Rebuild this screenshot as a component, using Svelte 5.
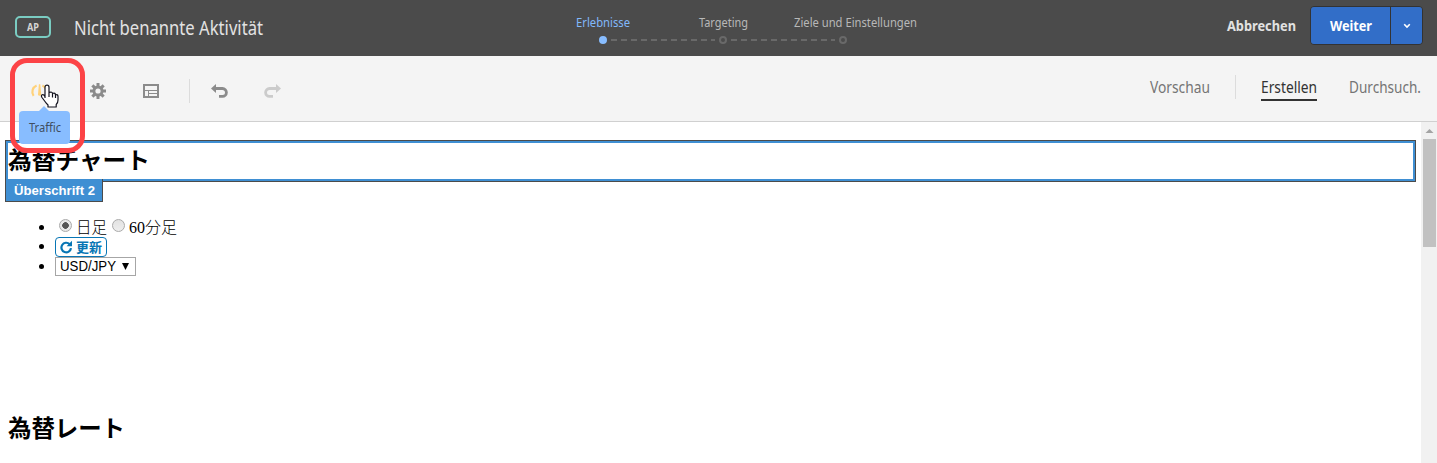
<script>
  const steps = [
    { label: 'Erlebnisse', width: 54, active: true },
    { label: 'Targeting', width: 49, active: false },
    { label: 'Ziele und Einstellungen', width: 123, active: false, shift: 12.5 }
  ];
</script>

{#snippet fit(text, width, size, height, base)}
  <svg class="fit" {width} {height}>
    <text x="0" y={base} font-size={size} textLength={width} lengthAdjust="spacingAndGlyphs">{text}</text>
  </svg>
{/snippet}

<div class="app">
  <header>
    <div class="identity">
      <span class="tag">{@render fit('AP', 12, 10, 18, 12.5)}</span>
      <h1>{@render fit('Nicht benannte Aktivität', 189, 19, 28, 21)}</h1>
    </div>
    <ol class="steps">
      {#each steps as step}
        <li class:active={step.active}>
          <span class="step-label" style:margin-left="{(step.shift ?? 0) * 2}px">{@render fit(step.label, step.width, 12.5, 18, 13)}</span>
          <i class="dot"></i>
        </li>
      {/each}
      <svg class="line" width="240" height="2"><path d="M8 1H112M128 1H232" stroke="#696969" stroke-width="2" stroke-dasharray="6 4" /></svg>
    </ol>
    <div class="actions">
      <span class="cancel">{@render fit('Abbrechen', 69, 14.5, 20, 15)}</span>
      <div class="split">
        <button class="next">{@render fit('Weiter', 42, 14.5, 20, 15)}</button>
        <button class="more" aria-label="Mehr"><svg width="8" height="6" viewBox="0 0 8 6"><path d="M1.2 1.2 4 4l2.8-2.8" fill="none" stroke="#fff" stroke-width="1.6" /></svg></button>
      </div>
    </div>
  </header>

  <nav>
    <div class="tools">
      <svg class="gauge" width="20" height="16" viewBox="0 0 20 16"><g fill="none" stroke="#ffd27a" stroke-width="2.2"><path d="M3.6 12.8A7 7 0 0 1 6.6 2.4M12.4 2.4A7 7 0 0 1 15.4 12.8" /></g><path d="M8.9 1.2h1.4l.9 10a1.6 1.6 0 1 1-3.2 0Z" fill="#ffd27a" /></svg>
      <svg class="gear" width="16" height="16" viewBox="-8 -8 16 16"><g fill="#8b8b8b">{#each [0, 45, 90, 135] as angle}<rect x="-1.5" y="-8" width="3" height="16" transform="rotate({angle})" />{/each}<circle r="5.5" /></g><circle r="2.6" fill="#f4f4f4" /></svg>
      <svg class="layout" width="16" height="14" viewBox="0 0 16 14"><path d="M1 1h14v12H1Z" fill="none" stroke="#8b8b8b" stroke-width="2" /><path d="M2 6.5h12M5.5 7v5M6 9.5h8" fill="none" stroke="#8b8b8b" /></svg>
      <i class="rule"></i>
      {@render arrow('#8b8b8b', false)}
      {@render arrow('#cbcbcb', true)}
    </div>
    <div class="modes">
      <span>{@render fit('Vorschau', 60, 15.5, 25, 17)}</span>
      <i class="rule"></i>
      <span class="current">{@render fit('Erstellen', 56, 15.5, 25, 17)}</span>
      <span>{@render fit('Durchsuch.', 72, 15.5, 25, 17)}</span>
    </div>
  </nav>

  <main>
    <div class="page">
      <h2 class="selected">{@render fit('為替チャート', 142, 23.5, 37, 28)}<span class="kind">{@render fit('Überschrift 2', 81, 13, 18, 13)}</span></h2>
      <ul>
        <li class="radios"><i class="radio on"></i><b>{@render fit('日足', 31, 16, 20, 16)}</b><i class="radio"></i><b>{@render fit('60分足', 48, 16, 20, 16)}</b></li>
        <li class="refresh"><span><svg width="13" height="14" viewBox="0 0 13 14"><path d="M9.6 4.1A4.8 4.8 0 1 0 11 8.2" fill="none" stroke="#0876b5" stroke-width="2.2" /><path d="M12 .8V6.2H6.6Z" fill="#0876b5" /></svg>更新</span></li>
        <li class="currency"><span>{@render fit('USD/JPY', 56, 13.8, 17, 13)}<svg width="8" height="7"><path d="M0 0h7L3.5 7Z" /></svg></span></li>
      </ul>
      <h2>{@render fit('為替レート', 117, 23.5, 37, 30.5)}</h2>
    </div>
    <div class="scrollbar"><svg width="16" height="17"><path d="M4.5 11h8L8.5 7Z" fill="#a3a3a3" /></svg><i></i></div>
  </main>

  <div class="tooltip">{@render fit('Traffic', 32, 12.5, 18, 13)}</div>
  <div class="highlight"></div>
  <svg class="pointer" width="20" height="25" viewBox="0 0 20 25"><path d="M5 14V3.2a2 2 0 0 1 4 0V8.5Q12.5 7.5 12.5 9.5Q15.5 8.5 15.5 11Q18 10 18 12.5V16Q18 19 16.2 20.5V23H8V21Q6 19 5 17.5L2 13.5Q.7 11.5 2.3 10.8T5 12.8M9 8.5V13M12.5 9.5V13.5M15.5 11V14" fill="#fff" stroke="#13131f" stroke-width="1.2" stroke-linejoin="round" /></svg>
</div>

{#snippet arrow(color, flipped)}
  <svg class="arrow" class:flipped width="17" height="14" viewBox="0 0 17 14"><path d="M0 4.5 5 0v9Z" fill={color} /><path d="M4 4.5h7.5a3.9 3.9 0 0 1 0 7.8H8" fill="none" stroke={color} stroke-width="2.8" /></svg>
{/snippet}

<style>
  :global(body) { margin: 0; background: #fff; }
  .app { position: relative; width: 1437px; height: 463px; overflow: hidden; font-family: "Noto Sans", sans-serif; display: flex; flex-direction: column; }
  .fit { display: block; overflow: visible; fill: currentColor; flex: none; }
  header { box-sizing: border-box; height: 56px; flex: none; background: #4b4b4b; display: grid; grid-template-columns: 543px 360px 1fr; }
  .identity { display: flex; align-items: center; padding-left: 15px; gap: 23px; }
  .tag { box-sizing: border-box; width: 36px; height: 22px; border: 2px solid #7accc2; border-radius: 5px; color: #d5d5d5; display: flex; align-items: center; justify-content: center; font-weight: 700; margin-bottom: 2px; }
  h1 { margin: 0; color: #e2e2e2; font-weight: 400; }
  .steps { margin: 0; padding: 14px 0 0; list-style: none; display: grid; grid-template-columns: repeat(3, 120px); position: relative; align-content: start; }
  .steps li { display: flex; flex-direction: column; align-items: center; gap: 4px; color: #b8b8b8; }
  .steps li.active { color: #82b9fb; }
  .dot { box-sizing: border-box; width: 8px; height: 8px; border: 2px solid #696969; border-radius: 50%; }
  .active .dot { background: #88bdff; border-color: #88bdff; }
  .line { position: absolute; left: 60px; top: 39px; }
  .actions { display: flex; align-items: flex-start; justify-content: flex-end; padding: 6px 14px 0 0; gap: 14px; font-weight: 700; }
  .cancel { color: #e2e2e2; margin-top: 10px; }
  .split { display: flex; box-sizing: border-box; width: 113px; height: 39px; border: 1px solid #333; border-radius: 4px; overflow: hidden; }
  button { border: 0; background: #326ec8; padding: 0; margin: 0; color: #fff; font: inherit; display: flex; align-items: center; justify-content: center; }
  .next { width: 79px; }
  .more { flex: 1; border-left: 1px solid #333; }
  nav { box-sizing: border-box; height: 66px; flex: none; background: #f4f4f4; border-bottom: 1px solid #d0d0d0; display: flex; justify-content: space-between; padding: 0 16px 0 30px; }
  .tools { display: flex; align-items: center; height: 70px; }
  .gear { margin-left: 40px; }
  .layout { margin-left: 37px; }
  .rule { width: 1px; height: 24px; background: #dcdcdc; }
  .tools .rule { margin: 0 21px 0 30px; }
  .arrow { margin-right: 36px; }
  .flipped { transform: scaleX(-1); }
  .modes { display: flex; align-items: flex-start; padding-top: 20px; color: #757575; }
  .modes .rule { margin: -1px 25px 0; }
  .current { color: #323232; border-bottom: 2px solid #323232; margin-right: 32px; height: 23px; }
  main { flex: 1; display: flex; justify-content: space-between; min-height: 0; }
  .page { width: 1411px; padding: 18px 0 0 5px; color: #000; }
  h2 { box-sizing: border-box; margin: 0; height: 42px; padding-left: 3px; font-family: "Noto Sans CJK JP", sans-serif; font-weight: 700; }
  .selected { position: relative; border: 1px solid #4b4b4b; padding-left: 2px; box-shadow: inset 0 0 0 2px #3f8fd3; }
  .kind { position: absolute; left: -1px; top: 38px; box-sizing: border-box; width: 98px; height: 23px; padding: 3px 8px; background: #3f8fd3; border: 1px solid #4b4b4b; border-top: 0; color: #fff; font: 700 13px "Liberation Sans", sans-serif; }
  ul { list-style: none; margin: 35px 0 130px 31px; padding: 0; }
  ul > li { display: flex; align-items: center; height: 20px; padding-left: 19px; }
  ul > li::before { content: ""; width: 5px; height: 5px; border-radius: 50%; background: #000; margin: 0 11px 0 -16px; flex: none; }
  .radios b { font-family: "Liberation Serif", "Noto Sans CJK JP", serif; font-weight: 300; margin: 0 6px 0 -1px; }
  .radio { box-sizing: border-box; width: 13px; height: 13px; border: 1px solid #aaa; border-radius: 50%; background: linear-gradient(#e2e2e2, #eee); margin: 0 4px 3px 0; }
  ul > .radios::before { margin-right: 16px; }
  .radios .radio { position: relative; left: -1px; }
  .on { background: radial-gradient(circle, #555 0 3px, #e8e8e8 3.6px); }
  ul > .refresh { height: 19px; }
  .refresh span { box-sizing: border-box; width: 52px; height: 20px; border: 1px solid #0876b5; border-radius: 4px; display: flex; align-items: center; gap: 3px; padding-left: 4px; color: #0876b5; font: 700 13px/18px "Noto Sans CJK JP", sans-serif; }
  .currency span { box-sizing: border-box; width: 81px; height: 19px; border: 1px solid #a6a6a6; display: flex; align-items: center; gap: 6px; padding-left: 4px; font-family: "Liberation Sans", sans-serif; }
  .scrollbar { width: 16px; background: #f1f1f1; display: flex; flex-direction: column; align-items: center; }
  .scrollbar i { width: 13px; height: 108px; background: #c1c1c1; }
  .tooltip { position: absolute; left: 19px; top: 111px; width: 51px; height: 33px; background: #88bdff; border-radius: 4px; color: #3f4d60; display: flex; align-items: center; justify-content: center; }
  .tooltip::before { content: ""; position: absolute; left: 19px; top: -5px; border: 6px solid transparent; border-top: 0; border-bottom-color: #88bdff; }
  .highlight { position: absolute; box-sizing: border-box; left: 10px; top: 58px; width: 75px; height: 95px; border: 5px solid #fc4346; border-radius: 17px; }
  .pointer { position: absolute; left: 40px; top: 84px; }
</style>
